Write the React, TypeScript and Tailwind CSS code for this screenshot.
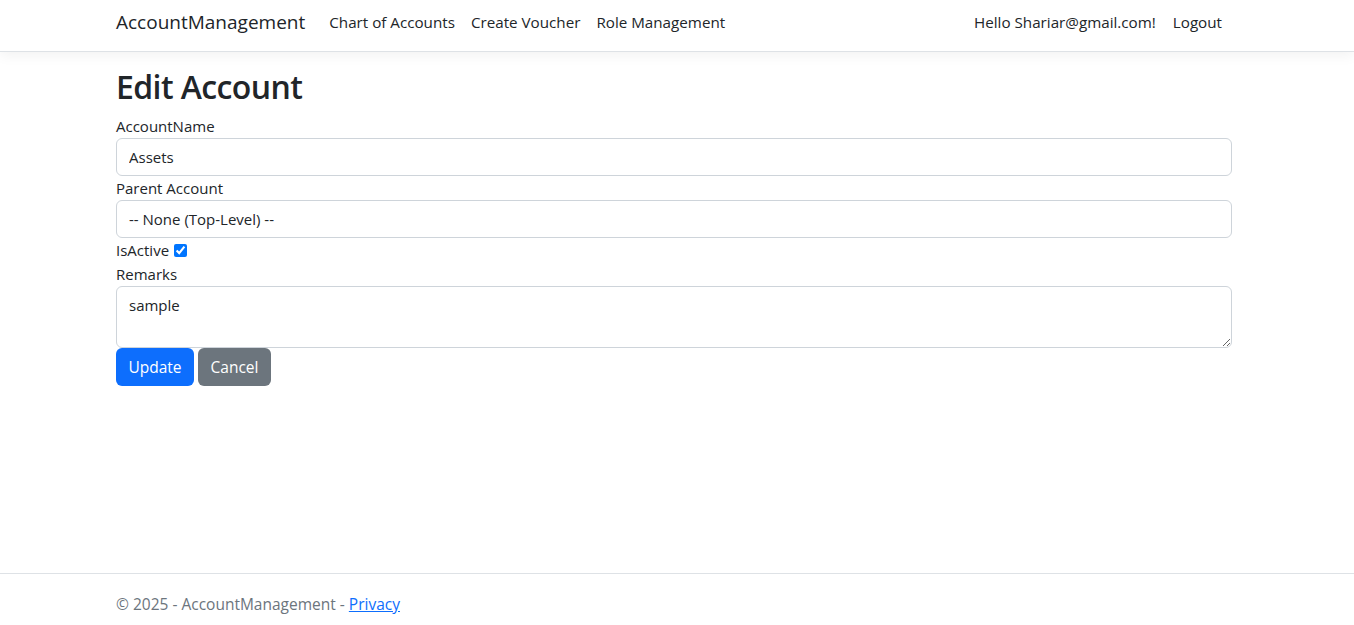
import React from "react";

export default function App() {
  const font = { fontFamily: '"Open Sans", "Noto Sans", sans-serif' };
  return (
    <div className="relative h-[625px] w-full overflow-hidden bg-white text-[#212529]" style={font}>
      <nav className="h-[52px] border-b border-[#dee2e6] bg-white shadow-[0_4px_12px_rgba(0,0,0,0.05)]">
        <div className="ml-[116px] mr-[124px] flex h-[51px] items-start pt-[7px]">
          <span className="mr-[16px] text-[19px] leading-[30px] text-[#212529]">AccountManagement</span>
          <div className="flex flex-1 items-center pt-[3px] text-[15.2px] leading-[24px]">
            <a className="px-[8px]">Chart of Accounts</a>
            <a className="px-[8px]">Create Voucher</a>
            <a className="px-[8px]">Role Management</a>
            <div className="flex-1" />
            <a className="pl-[8px] pr-[9px]">Hello Shariar@gmail.com!</a>
            <a className="px-[8px]">Logout</a>
          </div>
        </div>
      </nav>
      <main className="ml-[116px] w-[1116px] text-[15px] leading-[24px]">
        <h1 className="mb-[7px] mt-[14px] text-[32px] font-semibold leading-[41px] tracking-[-0.6px]">Edit Account</h1>
        <div>AccountName</div>
        <input
          readOnly
          value="Assets"
          className="block h-[38px] w-full rounded-[6px] border border-[#ced4da] px-[12px] text-[15px] text-[#212529] outline-none"
        />
        <div>Parent Account</div>
        <select
          className="block h-[38px] w-full appearance-none rounded-[6px] border border-[#ced4da] bg-white px-[12px] text-[15px] text-[#212529] outline-none"
          defaultValue=""
        >
          <option value="">-- None (Top-Level) --</option>
        </select>
        <div className="flex h-[24px] items-center">
          <span>IsActive</span>
          <input type="checkbox" defaultChecked className="ml-[5px] h-[13px] w-[13px]" />
        </div>
        <div>Remarks</div>
        <textarea
          readOnly
          value="sample"
          className="block h-[62px] w-full rounded-[6px] border border-[#ced4da] px-[12px] py-[6px] text-[15px] leading-[24px] text-[#212529] outline-none"
        />
        <div className="flex gap-[4px]">
          <button className="h-[38px] w-[78px] rounded-[6px] bg-[#0d6efd] text-[15.5px] text-white">Update</button>
          <button className="h-[38px] w-[73px] rounded-[6px] bg-[#6c757d] text-[15.5px] text-white">Cancel</button>
        </div>
      </main>
      <footer className="absolute bottom-0 left-0 right-0 h-[52px] border-t border-[#dee2e6] text-[15.5px] leading-[24px] text-[#6c757d]">
        <div className="ml-[116px] pt-[18px]">
          © 2025 - AccountManagement - <a className="text-[#0d6efd] underline">Privacy</a>
        </div>
      </footer>
    </div>
  );
}
